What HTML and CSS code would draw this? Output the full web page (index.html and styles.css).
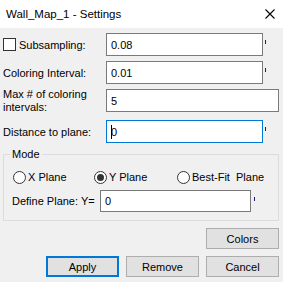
FILE: index.html
```html
<!DOCTYPE html>
<html lang="en">
<head>
    <meta charset="UTF-8">
    <title>Wall_Map_1 - Settings</title>
    <link rel="stylesheet" href="styles.css">
</head>
<body>
    <div class="titlebar">
        <span class="title">Wall_Map_1 - Settings</span>
        <svg class="close" width="10" height="10" viewBox="0 0 10 10">
            <path d="M0.5 0.5 L9.5 9.5 M9.5 0.5 L0.5 9.5" stroke="#000" stroke-width="1.1" fill="none"/>
        </svg>
    </div>

    <div class="content">
        <div class="row">
            <div class="label check-label">
                <span class="checkbox"></span>
                <span>Subsampling:</span>
            </div>
            <div class="field">0.08</div>
            <span class="tick"></span>
        </div>

        <div class="row row-2">
            <div class="label">Coloring Interval:</div>
            <div class="field">0.01</div>
            <span class="tick"></span>
        </div>

        <div class="row row-3">
            <div class="label two-line">Max # of coloring<br>intervals:</div>
            <div class="field wide">5</div>
        </div>

        <div class="row row-4">
            <div class="label">Distance to plane:</div>
            <div class="field focused"><span class="caret"></span>0</div>
            <span class="tick"></span>
        </div>

        <fieldset class="mode">
            <legend>Mode</legend>
            <div class="radios">
                <label class="radio-item item-x"><span class="radio"></span>X Plane</label>
                <label class="radio-item item-y"><span class="radio checked"></span>Y Plane</label>
                <label class="radio-item"><span class="radio"></span>Best-Fit&nbsp; Plane</label>
            </div>
            <div class="define-row">
                <div class="define-label">Define Plane: Y=</div>
                <div class="field define-field">0</div>
                <span class="tick"></span>
            </div>
        </fieldset>

        <div class="colors-row">
            <button class="btn">Colors</button>
        </div>
        <div class="buttons-row">
            <button class="btn default">Apply</button>
            <button class="btn">Remove</button>
            <button class="btn">Cancel</button>
        </div>
    </div>
</body>
</html>
```

FILE: styles.css
```css
body {
    margin: 0;
    width: 283px;
    height: 282px;
    overflow: hidden;
    background-color: #f0f0f0;
    font-family: "Liberation Sans", Arial, sans-serif;
    font-size: 11px;
    color: #000;
}
.titlebar {
    height: 28px;
    background-color: #fff;
    display: flex;
    align-items: center;
    justify-content: space-between;
    padding: 0 8px 0 6px;
}
.title {
    font-size: 11.5px;
}
.close {
    display: block;
}
.content {
    padding: 0 4px 0 3px;
}
.row {
    display: flex;
    align-items: center;
    height: 23px;
    margin-top: 5px;
}
.row-3 {
    margin-top: 5px;
}
.row-4 {
    margin-top: 8px;
}
.label {
    width: 103px;
    flex: none;
}
.two-line {
    line-height: 13px;
}
.check-label {
    display: flex;
    align-items: center;
    gap: 3px;
}
.checkbox {
    width: 11px;
    height: 11px;
    border: 1px solid #333;
    background-color: #fff;
}
.field {
    box-sizing: border-box;
    width: 157px;
    height: 23px;
    border: 1px solid #7a7a7a;
    background-color: #fff;
    padding: 0 4px;
    display: flex;
    align-items: center;
    flex: none;
}
.field.wide {
    width: 173px;
}
.field.focused {
    border-color: #0078d7;
}
.caret {
    display: inline-block;
    width: 1px;
    height: 14px;
    background-color: #000;
    margin-right: -1px;
}
.tick {
    align-self: flex-start;
    width: 1px;
    height: 4px;
    margin: 7px 0 0 2px;
    background-color: #1a1a7a;
}
.mode {
    margin: 5px 0 0;
    border: 1px solid #dcdcdc;
    padding: 0 8px 8px 9px;
    min-width: 0;
}
.mode legend {
    padding: 0 2px;
    margin-left: -3px;
    line-height: 13px;
}
.radios {
    display: flex;
    align-items: center;
    height: 14px;
    margin-top: 9px;
}
.radio-item {
    display: flex;
    align-items: center;
    gap: 2px;
}
.item-x {
    width: 81px;
}
.item-y {
    width: 83px;
}
.radio {
    box-sizing: border-box;
    width: 13px;
    height: 13px;
    border: 1px solid #333;
    border-radius: 50%;
    background-color: #fff;
    display: flex;
    align-items: center;
    justify-content: center;
}
.radio.checked::after {
    content: "";
    width: 7px;
    height: 7px;
    border-radius: 50%;
    background-color: #333;
}
.define-row {
    display: flex;
    align-items: center;
    margin-top: 6px;
    height: 22px;
}
.define-label {
    width: 88px;
    margin-left: -1px;
    flex: none;
}
.define-field {
    width: 151px;
    height: 22px;
}
.define-row .tick {
    margin-left: 3px;
}
.colors-row {
    display: flex;
    justify-content: flex-end;
    margin-top: 7px;
}
.buttons-row {
    display: flex;
    justify-content: flex-end;
    gap: 7px;
    margin-top: 7px;
}
.btn {
    box-sizing: border-box;
    width: 73px;
    height: 21px;
    background-color: #e1e1e1;
    border: 1px solid #adadad;
    font-family: "Liberation Sans", Arial, sans-serif;
    font-size: 11px;
    color: #000;
    padding: 0;
}
.btn.default {
    border: 2px solid #0078d7;
}
```
